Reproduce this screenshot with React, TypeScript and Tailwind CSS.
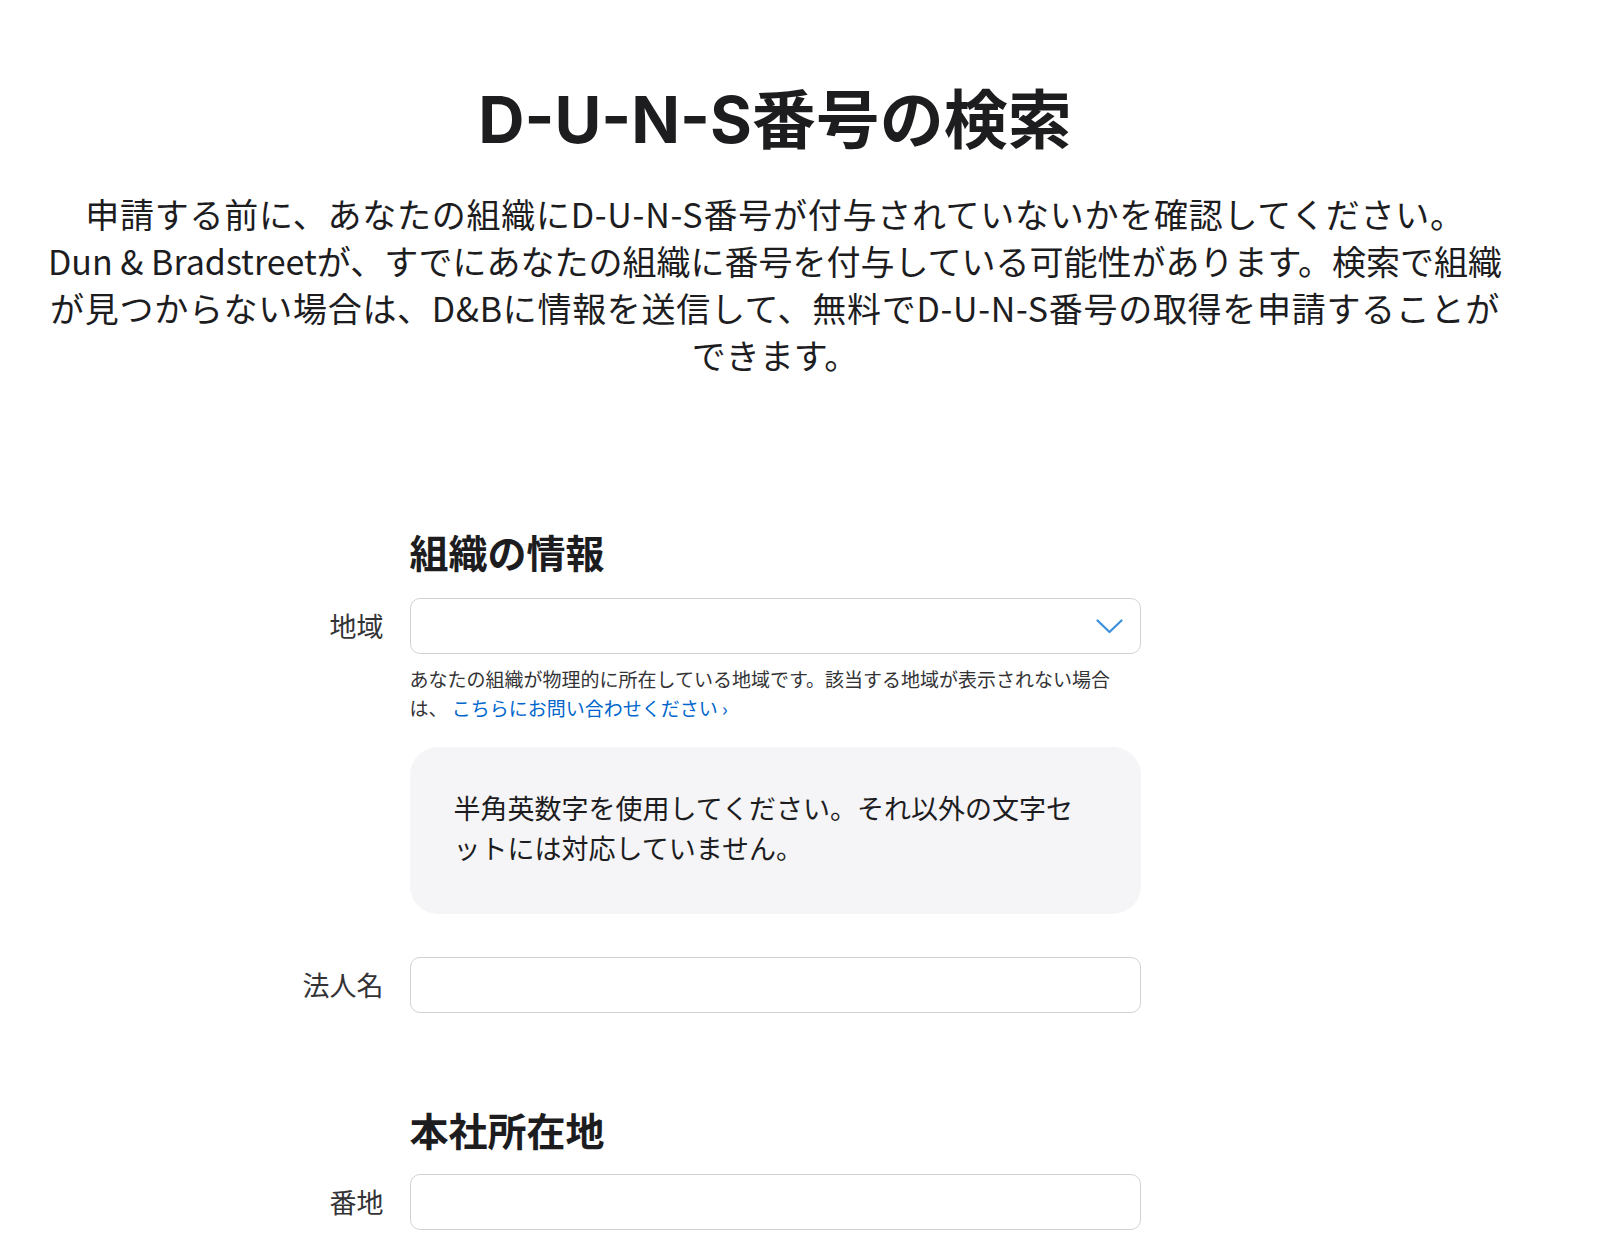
import React from "react";

const BODY = { fontFamily: '"Noto Sans CJK JP", "Noto Sans", sans-serif' };
const TITLE = { fontFamily: 'Inter, "Noto Sans CJK JP", sans-serif' };

const Chevron = () => (
  <svg width="27" height="15" viewBox="0 0 27 15" fill="none">
    <path
      d="M1.5 1.5 L13.5 13 L25.5 1.5"
      stroke="#3b8fdc"
      strokeWidth="2.2"
      strokeLinecap="round"
      strokeLinejoin="round"
    />
  </svg>
);

const Field = ({
  label,
  children,
  className = "",
}: {
  label?: string;
  children: React.ReactNode;
  className?: string;
}) => (
  <div className={`grid grid-cols-[1fr_731px_1fr] items-center ${className}`}>
    <div className="text-right pr-[26px] text-[27px] leading-[36px] text-[#333336]">
      {label}
    </div>
    <div>{children}</div>
    <div></div>
  </div>
);

const Input = ({ select }: { select?: boolean }) => (
  <div className="h-[56px] w-full rounded-[10px] border border-[#d2d2d7] bg-white flex items-center justify-end pr-[17px]">
    {select && <Chevron />}
  </div>
);

const Heading = ({ text, className = "" }: { text: string; className?: string }) => (
  <Field className={className}>
    <h3 className="text-[39px] leading-[46px] font-bold text-[#1d1d1f]">{text}</h3>
  </Field>
);

export default function App() {
  return (
    <div className="w-[1550px] bg-white text-[#1d1d1f] pt-[84px] pb-[20px]" style={BODY}>
      <h1 className="text-center text-[64px] leading-[72px] font-bold" style={TITLE}>
        D-U-N-S番号の検索
      </h1>
      <p className="mt-[34px] text-center text-[34px] leading-[47px] whitespace-nowrap">
        <span className="tracking-[0.75px]">
          申請する前に、あなたの組織にD-U-N-S番号が付与されていないかを確認してください。
        </span>
        <br />
        Dun &amp; Bradstreetが、すでにあなたの組織に番号を付与している可能性があります。検索で組織
        <br />
        <span className="tracking-[0.7px]">
          が見つからない場合は、D&amp;Bに情報を送信して、無料でD-U-N-S番号の取得を申請することが
        </span>
        <br />
        できます。
      </p>

      <Heading text="組織の情報" className="mt-[150px]" />

      <Field label="地域" className="mt-[24px]">
        <Input select />
      </Field>

      <Field className="mt-[10px]">
        <p className="w-[712px] text-[19px] leading-[29px] text-[#333336]">
          あなたの組織が物理的に所在している地域です。該当する地域が表示されない場合は、{" "}
          <a href="#" className="text-[#0066cc]">
            こちらにお問い合わせください ›
          </a>
        </p>
      </Field>

      <Field className="mt-[25px]">
        <div className="rounded-[28px] bg-[#f5f5f7] pl-[44px] pr-[44px] pt-[41px] pb-[46px] text-[27px] leading-[40px] text-[#1d1d1f]">
          半角英数字を使用してください。それ以外の文字セットには対応していません。
        </div>
      </Field>

      <Field label="法人名" className="mt-[43px]">
        <Input />
      </Field>

      <Heading text="本社所在地" className="mt-[93px]" />

      <Field label="番地" className="mt-[22px]">
        <Input />
      </Field>
    </div>
  );
}
